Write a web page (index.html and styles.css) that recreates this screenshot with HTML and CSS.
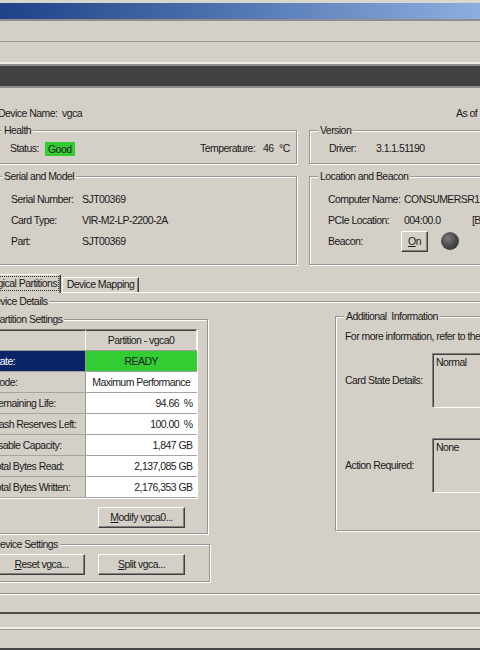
FILE: index.html
```html
<!DOCTYPE html>
<html>
<head>
<meta charset="utf-8">
<title>Device Details</title>
<link rel="stylesheet" href="styles.css">
</head>
<body>
<div class="titlebar"></div>
<div class="menubar"></div>
<div class="toolbar"></div>
<div class="darkbar"></div>

<div class="devrow">
  <span class="devname">Device Name:&nbsp; vgca</span>
  <span class="asof">As of :</span>
</div>

<div class="topgrid">
  <div class="group health">
    <span class="gtitle">Health</span>
    <span>Status:</span>
    <span class="good">Good</span>
    <span>Temperature:</span>
    <span>46</span>
    <span>°C</span>
  </div>
  <div class="group version">
    <span class="gtitle">Version</span>
    <span class="vlbl">Driver:</span>
    <span>3.1.1.51190</span>
  </div>
  <div class="group rows serial">
    <span class="gtitle">Serial and Model</span>
    <div class="row"><span class="lbl">Serial Number:</span><span>SJT00369</span></div>
    <div class="row"><span class="lbl">Card Type:</span><span>VIR-M2-LP-2200-2A</span></div>
    <div class="row"><span class="lbl">Part:</span><span>SJT00369</span></div>
  </div>
  <div class="group rows location">
    <span class="gtitle">Location and Beacon</span>
    <div class="row"><span class="lbl">Computer Name:</span><span>CONSUMERSR1</span></div>
    <div class="row"><span class="lbl">PCIe Location:</span><span class="pcie">004:00.0</span><span>[B</span></div>
    <div class="row"><span class="lbl">Beacon:</span><button class="btn on"><u>O</u>n</button><span class="lamp"></span></div>
  </div>
</div>

<div class="tabs">
  <div class="tab active"><span class="focus">Logical Partitions</span></div>
  <div class="tab">Device Mapping</div>
</div>

<div class="tabpanel">
  <div class="group details">
    <span class="gtitle">Device Details</span>
    <div class="details-cols">
      <div class="leftcol">
        <div class="group partition">
          <span class="gtitle">Partition Settings</span>
          <div class="tablebox">
            <table>
              <tr><th class="l"></th><th>Partition - vgca0</th></tr>
              <tr><td class="l sel">State:</td><td class="ready">READY</td></tr>
              <tr><td class="l">Mode:</td><td class="c">Maximum Performance</td></tr>
              <tr><td class="l">Remaining Life:</td><td>94.66&nbsp; %</td></tr>
              <tr><td class="l">Flash Reserves Left:</td><td>100.00&nbsp; %</td></tr>
              <tr><td class="l">Usable Capacity:</td><td>1,847 GB</td></tr>
              <tr><td class="l">Total Bytes Read:</td><td>2,137,085 GB</td></tr>
              <tr><td class="l">Total Bytes Written:</td><td>2,176,353 GB</td></tr>
            </table>
          </div>
          <button class="btn modify"><u>M</u>odify vgca0...</button>
        </div>
        <div class="group devset">
          <span class="gtitle">Device Settings</span>
          <button class="btn wide"><u>R</u>eset vgca...</button>
          <button class="btn wide"><u>S</u>plit vgca...</button>
        </div>
      </div>
      <div class="group addinfo">
        <span class="gtitle">Additional&nbsp; Information</span>
        <div class="info">For more information, refer to the</div>
        <div class="ai-grid">
          <span>Card State Details:</span>
          <div class="textbox">Normal</div>
          <span>Action Required:</span>
          <div class="textbox">None</div>
        </div>
      </div>
    </div>
  </div>
</div>

<div class="sb1"></div>
<div class="sb2"></div>
</body>
</html>
```

FILE: styles.css
```css
* { box-sizing: border-box; }
html, body { margin: 0; width: 480px; height: 650px; overflow: hidden; }
body {
  background: #d4d0c8;
  color: #1a1a1a;
  font-family: "Liberation Sans", Arial, sans-serif;
  font-size: 10.5px;
  letter-spacing: -0.55px;
  line-height: 13px;
}

.titlebar {
  height: 21px;
  border-top: 3px solid #dad6ce;
  border-bottom: 2px solid #8e8e8e;
  background: linear-gradient(to right, #1f4289, #4d71ad 45%, #8cafe0);
}
.menubar { height: 21px; border-bottom: 1px solid #9a9a9a; }
.toolbar { height: 24px; border-bottom: 2px solid #8e8e8e; box-shadow: inset 0 -2px 0 #eeece8; }
.darkbar { height: 22px; background: #414141; border-bottom: 2px solid #8c8c8c; }

.devrow { display: flex; margin: 18px 0 0 -2px; height: 14px; line-height: 14px; white-space: nowrap; }
.devname { width: 458px; flex: none; }

.group {
  position: relative;
  border: 1px solid #949494;
  box-shadow: inset 1px 1px 0 #fff, 1px 1px 0 #fff;
}
.gtitle {
  position: absolute;
  top: -7px;
  left: 8px;
  padding: 0 2px;
  background: #d4d0c8;
  line-height: 13px;
  white-space: nowrap;
}

.topgrid {
  display: grid;
  grid-template-columns: 304px 200px;
  grid-template-rows: 34px 89px;
  gap: 12px;
  margin: 10px 0 0 -7px;
}
.health {
  display: grid;
  grid-template-columns: 35px 155px 63px 16px auto;
  align-items: center;
  padding: 3px 0 0 16px;
  white-space: nowrap;
}
.good { justify-self: start; background: #33cc33; padding: 0 3px; line-height: 14px; }
.version { display: flex; align-items: center; padding: 3px 0 0 19px; white-space: nowrap; }
.vlbl { width: 47px; flex: none; }

.rows { padding-top: 12px; white-space: nowrap; }
.serial { padding-left: 17px; }
.location { padding-left: 18px; }
.row { display: flex; align-items: center; height: 21px; }
.serial .lbl { width: 71px; flex: none; }
.location .lbl { width: 76px; flex: none; }
.pcie { width: 68px; flex: none; }

.btn {
  font: inherit;
  letter-spacing: inherit;
  color: #1a1a1a;
  background: #d4d0c8;
  border: 1px solid;
  border-color: #fff #404040 #404040 #fff;
  box-shadow: inset -1px -1px 0 #808080;
  height: 21px;
  padding: 0;
  margin: 0;
  white-space: nowrap;
}
.on { width: 27px; margin-left: -3px; }
.lamp {
  width: 18px; height: 18px; border-radius: 50%; margin-left: 13px; margin-top: -2px;
  background: radial-gradient(circle at 38% 35%, #7a7a7a, #454545 55%, #2e2e2e);
}

.tabs {
  display: flex;
  align-items: flex-end;
  margin: 10px 0 0 -20px;
  height: 18px;
  border-bottom: 1px solid #fff;
  white-space: nowrap;
}
.tab {
  width: 77px;
  height: 15px;
  border: 1px solid;
  border-bottom: none;
  border-color: #fff #404040 #fff #fff;
  box-shadow: inset -1px 0 0 #808080;
  text-align: center;
  line-height: 13px;
  margin-left: 1px;
}
.tab.active {
  width: 81px;
  height: 19px;
  margin: 0 0 -1px 0;
  padding: 2px 2px 0 0;
  text-align: right;
  background: #d4d0c8;
  position: relative;
}
.focus { outline: 1px dotted #333; outline-offset: 0; padding: 0 1px 1px; }

.tabpanel { padding-top: 8px; }
.details { margin-left: -23px; width: 520px; padding: 14px 0 11px 4px; }
.details-cols { display: flex; align-items: flex-start; }
.leftcol { width: 228px; flex: none; padding-top: 3px; }
.partition { width: 226px; padding: 9px 9px 5px 5px; }
.tablebox {
  width: 210px;
  border: 1px solid;
  border-color: #808080 #fff #fff #808080;
}
.tablebox table {
  width: 100%;
  border-collapse: collapse;
  border-top: 1px solid #404040;
  border-left: 1px solid #404040;
  white-space: nowrap;
}
.tablebox th {
  height: 20px;
  padding: 0;
  font-weight: normal;
  background: #d4d0c8;
  border-bottom: 1px solid #9a9a9a;
  border-right: 1px solid #f4f4f4;
}
.tablebox th.l { width: 96px; }
.tablebox td {
  height: 21px;
  padding: 0 4px 0 0;
  background: #fff;
  text-align: right;
  border-bottom: 1px solid #a4a4a4;
  overflow: hidden;
}
.tablebox td.l {
  background: #d4d0c8;
  text-align: left;
  padding: 0 0 0 1px;
  border-right: 1px solid #9a9a9a;
  max-width: 96px;
}
.tablebox td.sel { background: #0a246a; color: #fff; }
.tablebox td.ready { background: #33cc33; text-align: center; padding: 0; }
.tablebox td.c { text-align: center; padding: 0; }

.modify { width: 87px; margin: 8px 0 0 110px; display: block; }
.devset { width: 228px; margin-top: 10px; padding: 9px 0 6px 15px; display: flex; gap: 13px; }
.wide { width: 87px; }

.addinfo { margin-left: 125px; width: 180px; height: 215px; flex: none; padding: 13px 0 0 9px; white-space: nowrap; }
.info { line-height: 13px; margin-bottom: 10px; }
.ai-grid {
  display: grid;
  grid-template-columns: 87px 80px;
  grid-template-rows: 55px 55px;
  row-gap: 30px;
  align-items: center;
}
.textbox {
  align-self: stretch;
  border: 1px solid;
  border-color: #808080 #fff #fff #808080;
  box-shadow: inset 1px 1px 0 #404040;
  padding: 2px 3px;
}

.sb1 { margin-top: 18px; height: 17px; border-top: 2px solid #4c4c4c; border-bottom: 2px solid #f0eeea; }
.sb2 { height: 22px; border-top: 1px solid #9c9c9c; border-bottom: 3px solid #454545; }
```
